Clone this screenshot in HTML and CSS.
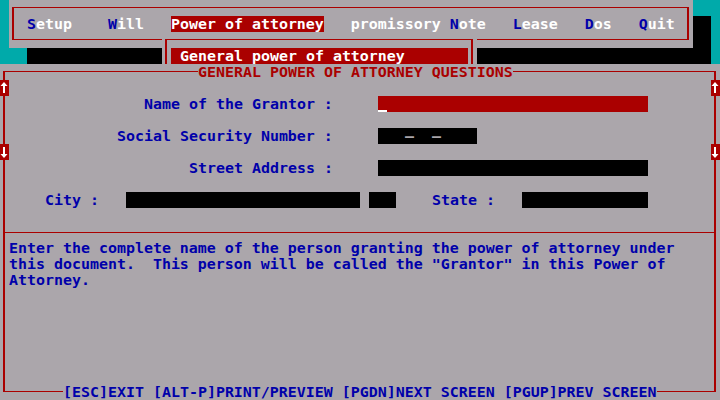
FILE: index.html
```html
<!DOCTYPE html>
<html lang="en">
<head>
    <meta charset="UTF-8">
    <title>General Power of Attorney</title>
    <link rel="stylesheet" href="styles.css">
</head>
<body>
    <header class="menubar">
        <nav class="menu-frame">
            <span class="menu-item setup"><span class="hot">S</span>etup</span>
            <span class="menu-item"><span class="hot">W</span>ill</span>
            <span class="menu-item active">Power of attorney</span>
            <span class="menu-item">promissory <span class="hot">N</span>ote</span>
            <span class="menu-item"><span class="hot">L</span>ease</span>
            <span class="menu-item"><span class="hot">D</span>os</span>
            <span class="menu-item"><span class="hot">Q</span>uit</span>
        </nav>
    </header>

    <!-- open pulldown from the menu bar -->
    <div class="dropdown">
        <div class="dropdown-frame">
            <div class="dropdown-item">General power of attorney</div>
        </div>
    </div>

    <main class="window">
        <div class="frame"></div>
        <h1 class="title">GENERAL POWER OF ATTORNEY QUESTIONS</h1>

        <span class="arrow arrow-up left"><svg viewBox="0 0 9 16" width="9" height="16"><path d="M4 2 L0.5 6 H3 V13 H5 V6 H7.5 Z"/></svg></span>
        <span class="arrow arrow-up right"><svg viewBox="0 0 9 16" width="9" height="16"><path d="M4 2 L0.5 6 H3 V13 H5 V6 H7.5 Z"/></svg></span>
        <span class="arrow arrow-down left"><svg viewBox="0 0 9 16" width="9" height="16"><path d="M4 14 L0.5 10 H3 V3 H5 V10 H7.5 Z"/></svg></span>
        <span class="arrow arrow-down right"><svg viewBox="0 0 9 16" width="9" height="16"><path d="M4 14 L0.5 10 H3 V3 H5 V10 H7.5 Z"/></svg></span>

        <label class="label lbl-name">Name of the Grantor :</label>
        <div class="field fld-name active"><span class="cursor"></span></div>

        <label class="label lbl-ssn">Social Security Number :</label>
        <div class="field fld-ssn">   –  –    </div>

        <label class="label lbl-street">Street Address :</label>
        <div class="field fld-street"></div>

        <label class="label lbl-city">City :</label>
        <div class="field fld-city"></div>
        <div class="field fld-extra"></div>
        <label class="label lbl-state">State :</label>
        <div class="field fld-state"></div>

        <div class="divider"></div>

        <p class="help">Enter the complete name of the person granting the power of attorney under
this document.  This person will be called the "Grantor" in this Power of
Attorney.</p>

        <div class="keys">[ESC]EXIT [ALT-P]PRINT/PREVIEW [PGDN]NEXT SCREEN [PGUP]PREV SCREEN</div>
    </main>
</body>
</html>
```

FILE: styles.css
```css
* {
    box-sizing: border-box;
}
html, body {
    margin: 0;
}
body {
    position: relative;
    width: 720px;
    height: 400px;
    overflow: hidden;
    background: #00aaaa;
    font-family: "DejaVu Sans Mono", "Liberation Mono", monospace;
    font-weight: bold;
    font-size: 14.95px;
    line-height: 16px;
    color: #0000aa;
}

/* top menu bar */
.menubar {
    width: 684px;
    height: 48px;
    margin-left: 9px;
    padding: 7px 4px 0 3px;
    background: #aba6ab;
    box-shadow: 18px 16px 0 #000;
}
.menu-frame {
    display: flex;
    gap: 27px;
    height: 33px;
    padding: 8px 0 0 13px;
    border: solid #aa0000;
    border-width: 1px 2px;
    color: #fff;
    white-space: pre;
}
.menu-item.setup {
    margin-right: 9px;
}
.hot {
    color: #0000aa;
}
.menu-item.active {
    background: #aa0000;
    color: #fff;
}

/* pulldown */
.dropdown {
    position: absolute;
    left: 162px;
    top: 32px;
    width: 315px;
    height: 32px;
    padding: 7px 4px 0 3px;
    background: #aba6ab;
}
.dropdown-frame {
    height: 25px;
    padding: 8px 0 0 4px;
    border: solid #aa0000;
    border-width: 1px 2px 0;
}
.dropdown-item {
    width: 297px;
    height: 16px;
    padding-left: 9px;
    background: #aa0000;
    color: #fff;
    white-space: pre;
}

/* main question window, 80 x 21 character cells */
.window {
    display: grid;
    grid-template-columns: repeat(80, 9px);
    grid-template-rows: repeat(21, 16px);
    height: 336px;
    margin-top: 16px;
    background: #aba6ab;
}
.frame {
    grid-column: 1 / -1;
    grid-row: 1 / -1;
    margin: 7px 4px 8px 3px;
    border: solid #aa0000;
    border-width: 1px 2px;
}
.title {
    grid-column: 23 / 58;
    grid-row: 1;
    margin: 0;
    font-size: inherit;
    font-weight: inherit;
    line-height: 16px;
    background: #aba6ab;
    color: #aa0000;
    white-space: pre;
}

.arrow {
    background: #aa0000;
    fill: #fff;
}
.arrow svg {
    display: block;
}
.arrow-up {
    grid-row: 2;
}
.arrow-down {
    grid-row: 6;
}
.arrow.left {
    grid-column: 1;
}
.arrow.right {
    grid-column: 80;
}

.label {
    white-space: pre;
    color: #0000aa;
}
.field {
    background: #000;
    color: #aba6ab;
    white-space: pre;
}
.field.active {
    display: flex;
    align-items: flex-end;
    background: #aa0000;
}
.cursor {
    width: 9px;
    height: 2px;
    background: #fff;
}

.lbl-name { grid-column: 17 / 38; grid-row: 3; }
.fld-name { grid-column: 43 / 73; grid-row: 3; }
.lbl-ssn { grid-column: 14 / 38; grid-row: 5; }
.fld-ssn { grid-column: 43 / 54; grid-row: 5; }
.lbl-street { grid-column: 22 / 38; grid-row: 7; }
.fld-street { grid-column: 43 / 73; grid-row: 7; }
.lbl-city { grid-column: 6 / 12; grid-row: 9; }
.fld-city { grid-column: 15 / 41; grid-row: 9; }
.fld-extra { grid-column: 42 / 45; grid-row: 9; }
.lbl-state { grid-column: 49 / 56; grid-row: 9; }
.fld-state { grid-column: 59 / 73; grid-row: 9; }

.divider {
    grid-column: 1 / -1;
    grid-row: 11;
    height: 1px;
    margin: 8px 4px 0 3px;
    background: #aa0000;
}
.help {
    grid-column: 2 / 80;
    grid-row: 12 / span 3;
    margin: 0;
    white-space: pre;
}
.keys {
    grid-column: 8 / 74;
    grid-row: 21;
    background: #aba6ab;
    white-space: pre;
}
```
